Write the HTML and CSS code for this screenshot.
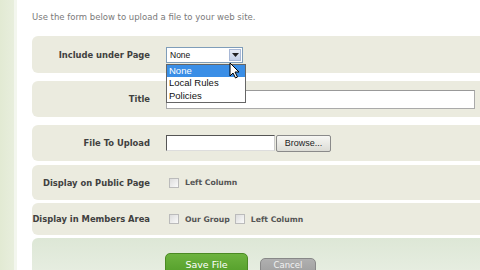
FILE: index.html
```html
<!DOCTYPE html>
<html>
<head>
<meta charset="utf-8">
<link rel="stylesheet" href="styles.css">
</head>
<body>
<div class="page">
  <div class="side"></div>
  <div class="main">
    <p class="intro">Use the form below to upload a file to your web site.</p>

    <div class="row r1">
      <div class="lbl">Include under Page</div>
      <div class="ctl">
        <div class="selwrap">
          <div class="select"><span class="val">None</span><span class="arrow"><svg width="7" height="4" viewBox="0 0 7 4"><path d="M0 0H7L3.5 4Z" fill="#222"/></svg></span></div>
          <ul class="list">
            <li class="sel">None</li>
            <li>Local Rules</li>
            <li>Policies</li>
          </ul>
          <svg class="cursor" width="12" height="17" viewBox="0 0 12 17"><path d="M1 1V14L4 11L6.5 16L8.5 15L6 10H10Z" fill="#fff" stroke="#000" stroke-width="1" stroke-linejoin="round"/></svg>
        </div>
      </div>
    </div>

    <div class="row r2">
      <div class="lbl">Title</div>
      <div class="ctl"><div class="text wide"></div></div>
    </div>

    <div class="row r3">
      <div class="lbl">File To Upload</div>
      <div class="ctl"><div class="text file"></div><div class="browse">Browse...</div></div>
    </div>

    <div class="row r4">
      <div class="lbl">Display on Public Page</div>
      <div class="ctl"><span class="cb"></span><span class="cbl">Left Column</span></div>
    </div>

    <div class="row r5">
      <div class="lbl">Display in Members Area</div>
      <div class="ctl"><span class="cb"></span><span class="cbl">Our Group</span><span class="cb"></span><span class="cbl">Left Column</span></div>
    </div>

    <div class="actions">
      <div class="btn save">Save File</div>
      <div class="btn cancel">Cancel</div>
    </div>
  </div>
</div>
</body>
</html>
```

FILE: styles.css
```css
* { box-sizing: border-box; }
html, body { margin: 0; padding: 0; background: #fff; }
body { width: 480px; height: 270px; overflow: hidden; font-family: "DejaVu Sans", Verdana, sans-serif; }
.page { display: flex; height: 270px; overflow: hidden; }
.side { width: 17px; flex: none; background: linear-gradient(90deg, #e2ead3, #e8eedd 85%, #f3f6ee 85%); }
.main { flex: 1; padding-left: 15px; }
.intro { margin: 0; padding: 12px 0 0 0; height: 36px; font-size: 8.5px; color: #7a7a7a; }
.row { display: flex; align-items: center; background: #ebebdf; border-radius: 6px 0 0 6px; }
.lbl { width: 118px; flex: none; text-align: right; font-weight: bold; font-size: 8.4px; color: #404040; white-space: nowrap; }
.ctl { margin-left: 16px; display: flex; align-items: center; }
.r1 { height: 37px; margin-bottom: 8px; }
.r2 { height: 36px; margin-bottom: 8px; }
.r3 { height: 36px; margin-bottom: 4px; }
.r4 { height: 35px; margin-bottom: 3px; }
.r5 { height: 32px; margin-bottom: 3px; }
.selwrap { position: relative; }
.select { width: 77px; height: 16px; border: 1px solid #7f9db9; background: #fff; display: flex; align-items: center; justify-content: space-between; padding: 0 1px 0 3px; font-size: 8.5px; font-family: "Liberation Sans", Arial, sans-serif; color: #111; }
.arrow { width: 12px; height: 12px; background: linear-gradient(#e6ecf6, #c4d1e8); border: 1px solid #a8b8d6; display: flex; align-items: center; justify-content: center; }
.list { position: absolute; left: 0; top: 17px; width: 80px; margin: 0; padding: 0; list-style: none; background: #fff; border: 1px solid #666; font-family: "Liberation Sans", Arial, sans-serif; font-size: 9.5px; color: #111; z-index: 2; }
.list li { height: 12.5px; line-height: 12.5px; padding-left: 2px; }
.list li.sel { background: #3a8ee6; color: #fff; }
.cursor { position: absolute; left: 63px; top: 15px; z-index: 3; }
.text { height: 19px; border: 1px solid #aaa; border-top-color: #999; background: #fff; }
.wide { width: 309px; }
.file { width: 109px; height: 16px; border: 1px solid #555; border-right-color: #ccc; border-bottom-color: #ddd; }
.browse { margin-left: 1px; width: 55px; height: 17px; border: 1px solid #8a8a8a; border-radius: 2px; background: linear-gradient(#f7f7f4, #dcdcd6); font-family: "Liberation Sans", Arial, sans-serif; font-size: 9px; color: #222; display: flex; align-items: center; justify-content: center; }
.cb { width: 10px; height: 10px; margin-left: 3px; border: 1px solid #bbb; background: linear-gradient(135deg, #ddd, #fafafa); flex: none; }
.cbl { margin-left: 6px; font-size: 7.7px; font-weight: bold; color: #555; }
.r5 .cbl:nth-child(2) { margin-right: 2px; }
.actions { height: 32px; background: linear-gradient(#dde7d6, #e6ede0); border-radius: 6px 0 0 0; display: flex; align-items: flex-start; padding: 15px 0 0 133px; overflow: hidden; }
.btn { height: 26px; border-radius: 5px; color: #fff; font-family: "DejaVu Sans", Verdana, sans-serif; font-size: 9.5px; display: flex; justify-content: center; padding-top: 5px; }
.save { width: 83px; background: linear-gradient(#6db33f, #4e9a25); border: 1px solid #4b8a24; }
.cancel { width: 56px; margin-left: 12px; margin-top: 5px; padding-top: 1px; font-size: 8.5px; color: #f2f2f2; background: linear-gradient(#b0b0b0, #959595); border: 1px solid #888; }
```
